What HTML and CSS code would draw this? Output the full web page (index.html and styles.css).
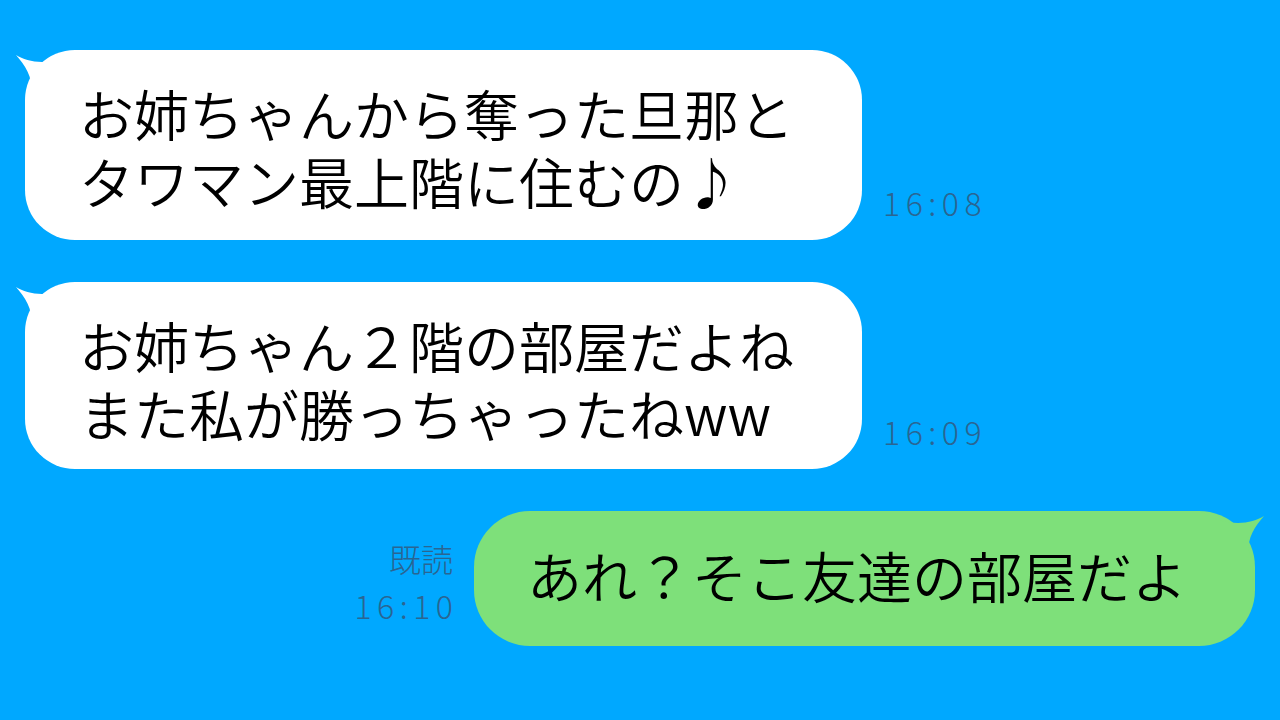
FILE: index.html
```html
<!DOCTYPE html>
<html lang="ja">
<head>
    <meta charset="UTF-8">
    <meta name="viewport" content="width=device-width, initial-scale=1.0">
    <title>トーク</title>
    <link rel="stylesheet" href="styles.css">
</head>
<body>
    <div class="talk">
        <div class="row">
            <div class="bubble other">
                <svg class="tail" viewBox="0 0 80 80" width="80" height="80"><path d="M3 5 C17 14 42 16 68 0 L80 0 L80 80 L12 80 L12 60 C13 54 17 48 18 40 C20 28 12 15 3 5 Z"/></svg>
                <p>お姉ちゃんから奪った旦那と<br>タワマン最上階に住むの♪</p>
            </div>
            <div class="meta"><span class="time">16:08</span></div>
        </div>

        <div class="row">
            <div class="bubble other short">
                <svg class="tail" viewBox="0 0 80 80" width="80" height="80"><path d="M3 5 C17 14 42 16 68 0 L80 0 L80 80 L12 80 L12 60 C13 54 17 48 18 40 C20 28 12 15 3 5 Z"/></svg>
                <p>お姉ちゃん２階の部屋だよね<br>また私が勝っちゃったねww</p>
            </div>
            <div class="meta"><span class="time">16:09</span></div>
        </div>

        <div class="row mine">
            <div class="meta">
                <span class="read">既読</span>
                <span class="time">16:10</span>
            </div>
            <div class="bubble self">
                <svg class="tail" viewBox="0 0 80 80" width="80" height="80"><path d="M3 5 C17 14 42 16 68 0 L80 0 L80 80 L12 80 L12 60 C13 54 17 48 18 40 C20 28 12 15 3 5 Z"/></svg>
                <p>あれ？そこ友達の部屋だよ</p>
            </div>
        </div>
    </div>
</body>
</html>
```

FILE: styles.css
```css
body {
    margin: 0;
    background-color: #00a8ff;
    font-family: "Noto Sans CJK JP", "Noto Sans", sans-serif;
    color: #000;
}
.talk {
    display: flex;
    flex-direction: column;
    gap: 42px;
    padding: 50px 25px;
}
.row {
    display: flex;
    align-items: flex-end;
    gap: 21px;
}
.row.mine {
    justify-content: flex-end;
}
.bubble {
    position: relative; /* la colita va encima de la esquina */
    border-radius: 50px;
    padding: 28px 68px 26px 54px;
}
.bubble p {
    margin: 0;
    font-size: 55px;
    font-weight: 350;
    line-height: 68px;
    white-space: nowrap;
    position: relative;
}
.bubble.other {
    background-color: #fff;
}
.bubble.short {
    padding-bottom: 23px;
}
.bubble.self {
    background-color: #7ee07a;
    border-radius: 56px;
    padding: 29px 68px 38px 53px;
}
.tail {
    position: absolute;
    top: 0;
    left: -12px;
}
.other .tail path {
    fill: #fff;
}
.self .tail {
    left: auto;
    right: -12px;
    transform: scaleX(-1);
}
.self .tail path {
    fill: #7ee07a;
}
.meta {
    display: flex;
    flex-direction: column;
    align-items: flex-end;
    gap: 15px;
    margin-bottom: 22px;
    color: #2a6592;
    line-height: 1;
}
.mine .meta {
    margin-bottom: 25px;
}
.time {
    font-size: 32px;
    font-weight: 300;
    letter-spacing: 5.5px;
    margin-right: -5.5px;
}
.read {
    font-size: 32px;
    font-weight: 300;
}
```
